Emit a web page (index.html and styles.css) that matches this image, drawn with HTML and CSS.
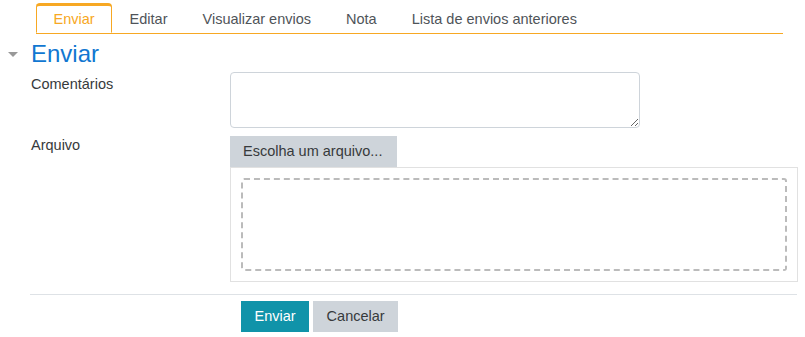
FILE: index.html
```html
<!DOCTYPE html>
<html lang="pt-BR">
<head>
<meta charset="utf-8">
<title>Enviar</title>
<link rel="stylesheet" href="styles.css">
</head>
<body>
<div class="page">
  <ul class="tabs">
    <li class="tab active">Enviar</li>
    <li class="tab">Editar</li>
    <li class="tab">Visualizar envios</li>
    <li class="tab">Nota</li>
    <li class="tab">Lista de envios anteriores</li>
  </ul>

  <div class="legend">
    <span class="caret"></span>
    <h3 class="legend-title">Enviar</h3>
  </div>

  <div class="row row-comments">
    <label class="row-label">Comentários</label>
    <div class="row-field">
      <textarea class="comment-box"></textarea>
    </div>
  </div>

  <div class="row row-file">
    <label class="row-label">Arquivo</label>
    <div class="row-field file-field">
      <button class="btn btn-grey btn-choose" type="button">Escolha um arquivo...</button>
      <div class="filemanager">
        <div class="dropzone"></div>
      </div>
    </div>
  </div>

  <div class="divider"></div>

  <div class="actions">
    <button class="btn btn-primary" type="button">Enviar</button>
    <button class="btn btn-grey" type="button">Cancelar</button>
  </div>
</div>
</body>
</html>
```

FILE: styles.css
```css
html, body {
  margin: 0;
  padding: 0;
  background: #ffffff;
}

body {
  font-family: "Liberation Sans", Arial, sans-serif;
  font-size: 14.5px;
  color: #373a3c;
}

.page {
  width: 805px;
}

.tabs {
  list-style: none;
  margin: 3px 0 0 36px;
  padding: 0;
  width: 747px;
  display: flex;
  border-bottom: 1px solid #f7a823;
  height: 30px;
}

.tab {
  padding: 1px 16.5px 0;
  border: 1px solid transparent;
  border-top-width: 3px;
  line-height: 25px;
  color: #4f5459;
  white-space: nowrap;
}

.tab.active {
  color: #f7a823;
  border-color: #f7a823;
  border-bottom: 1px solid #ffffff;
  border-radius: 4px 4px 0 0;
  background: #ffffff;
  height: 25px;
}

.legend {
  display: flex;
  align-items: center;
  margin-top: 5px;
  height: 29px;
}

.caret {
  width: 0;
  height: 0;
  margin-left: 8px;
  margin-right: 13px;
  margin-top: 2px;
  border-left: 5px solid transparent;
  border-right: 5px solid transparent;
  border-top: 5px solid #999999;
}

.legend-title {
  margin: 0;
  font-size: 24px;
  font-weight: normal;
  line-height: 29px;
  color: #1177d1;
}

.row {
  display: flex;
  padding-left: 31px;
}

.row-label {
  width: 199px;
  flex: none;
  line-height: 21px;
  padding-top: 1px;
}

.row-comments {
  margin-top: 4px;
}

.row-comments .row-label {
  padding-top: 2px;
}

.comment-box {
  display: block;
  box-sizing: border-box;
  width: 410px;
  height: 56px;
  margin: 0;
  padding: 6px 10px;
  border: 1px solid #ced4da;
  border-radius: 4px;
  font-family: inherit;
  font-size: 14.5px;
  background: #ffffff;
}

.row-file {
  margin-top: 6px;
}

.file-field {
  padding-top: 2px;
}

.btn {
  display: inline-block;
  box-sizing: border-box;
  height: 31px;
  padding: 0 12.5px;
  border: 1px solid transparent;
  border-radius: 0;
  font-family: inherit;
  font-size: 14.5px;
  line-height: 29px;
  margin: 0;
  cursor: pointer;
}

.btn-grey {
  background: #ced4da;
  border-color: #ced4da;
  color: #373a3c;
}

.btn-primary {
  background: #1093a9;
  border-color: #1093a9;
  color: #ffffff;
}

.btn-choose {
  display: block;
  width: 167px;
  text-align: left;
  padding-left: 12px;
}

.filemanager {
  box-sizing: border-box;
  width: 568px;
  height: 115px;
  border: 1px solid #e1e1e1;
  padding: 10px;
}

.dropzone {
  box-sizing: border-box;
  height: 93px;
  border: 2px dashed #bbbbbb;
  border-radius: 3px;
}

.divider {
  margin: 12px 8px 0 30px;
  height: 1px;
  background: #dee2e6;
}

.actions {
  display: flex;
  gap: 4px;
  margin-top: 6px;
  padding-left: 241px;
}
```
